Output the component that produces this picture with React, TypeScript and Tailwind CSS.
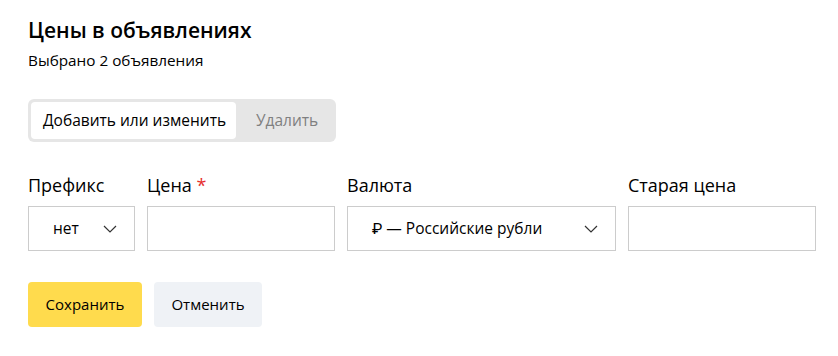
import React from "react";

const Chevron = () => (
  <svg width="14" height="8" viewBox="0 0 14 8" fill="none" className="shrink-0">
    <path d="M1 1l6 6 6-6" stroke="#333" strokeWidth="1.2" />
  </svg>
);

export default function App() {
  return (
    <div
      className="w-[838px] h-[356px] bg-white text-black pl-[28px] pr-[22px] pt-[16px]"
      style={{ fontFamily: "'Open Sans', Roboto, sans-serif" }}
    >
      <h1 className="text-[21px] leading-[28px] font-semibold text-black">Цены в объявлениях</h1>
      <p className="text-[15.3px] leading-[20px] mt-[6px] text-black">Выбрано 2 объявления</p>

      <div className="mt-[29px] flex w-fit items-center bg-[#e6e6e6] rounded-[6px] p-[3px] h-[43px]">
        <div className="h-[37px] w-[205px] bg-white rounded-[4px] pl-[12px] flex items-center text-[15.5px] text-black">
          Добавить или изменить
        </div>
        <div className="h-[37px] w-[97px] pl-[20px] flex items-center text-[15.5px] text-[#808080]">Удалить</div>
      </div>

      <div className="mt-[31px] flex gap-[12px]">
        <div className="w-[107px] shrink-0 flex flex-col">
          <div className="text-[18px] leading-[24px]">Префикс</div>
          <div className="mt-[9px] h-[45px] border border-[#cccccc] flex items-center justify-between pl-[24px] pr-[17px] text-[15.5px]">
            <span>нет</span>
            <Chevron />
          </div>
        </div>
        <div className="w-[188px] shrink-0 flex flex-col">
          <div className="text-[18px] leading-[24px]">
            Цена <span className="text-[#e62e2e]">*</span>
          </div>
          <div className="mt-[9px] h-[45px] border border-[#cccccc]" />
        </div>
        <div className="w-[269px] shrink-0 flex flex-col">
          <div className="text-[18px] leading-[24px]">Валюта</div>
          <div className="mt-[9px] h-[45px] border border-[#cccccc] flex items-center justify-between pl-[24px] pr-[17px] text-[15.5px]">
            <span>₽ — Российские рубли</span>
            <Chevron />
          </div>
        </div>
        <div className="w-[188px] shrink-0 flex flex-col">
          <div className="text-[18px] leading-[24px]">Старая цена</div>
          <div className="mt-[9px] h-[45px] border border-[#cccccc]" />
        </div>
      </div>

      <div className="mt-[31px] flex gap-[12px]">
        <button className="h-[45px] w-[114px] rounded-[4px] bg-[#ffdb4d] text-[15px] text-black flex items-center justify-center">
          Сохранить
        </button>
        <button className="h-[45px] w-[108px] rounded-[4px] bg-[#eff2f6] text-[15px] text-black flex items-center justify-center">
          Отменить
        </button>
      </div>
    </div>
  );
}
